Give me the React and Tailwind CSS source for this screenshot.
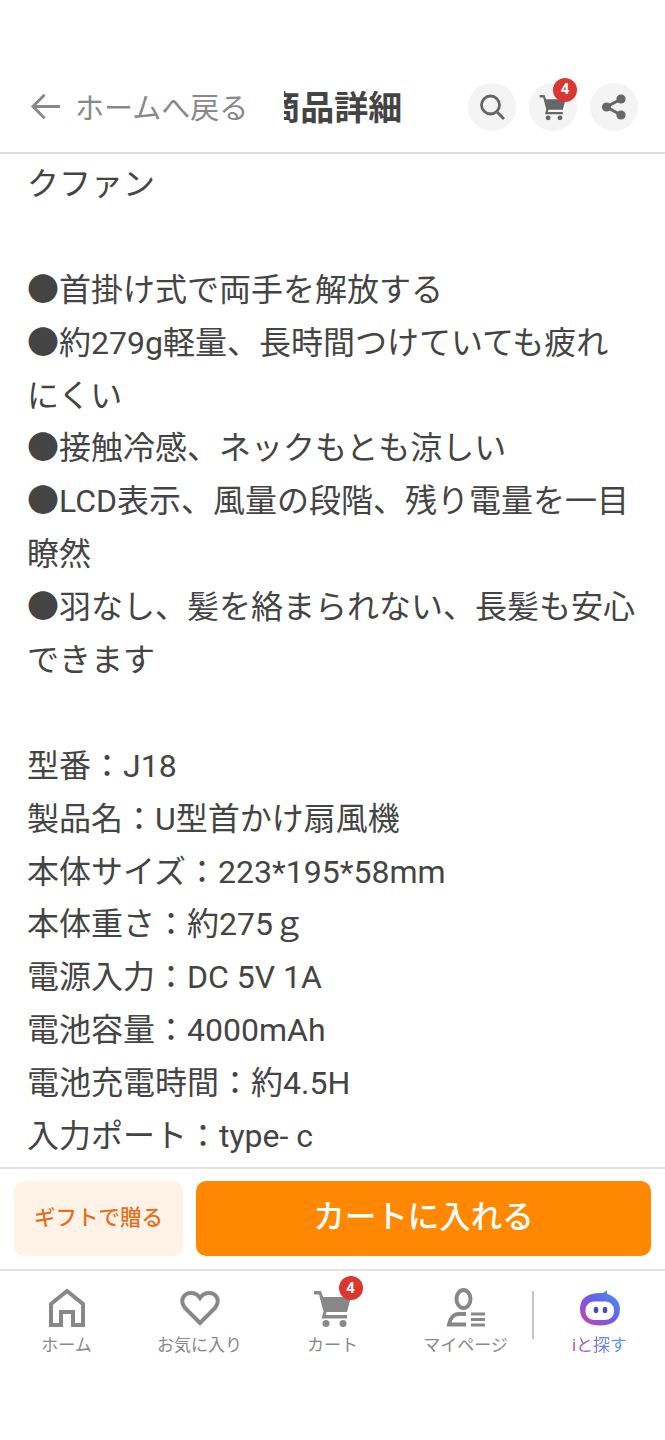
import React from 'react';

const FONT = 'Roboto, "Noto Sans CJK JP", sans-serif';

const LINES = [
  'クファン',
  '',
  '●首掛け式で両手を解放する',
  '●約279g軽量、長時間つけていても疲れ',
  'にくい',
  '●接触冷感、ネックもとも涼しい',
  '●LCD表示、風量の段階、残り電量を一目',
  '瞭然',
  '●羽なし、髪を絡まられない、長髪も安心',
  'できます',
  '',
  '型番：J18',
  '製品名：U型首かけ扇風機',
  '本体サイズ：223*195*58mm',
  '本体重さ：約275ｇ',
  '電源入力：DC 5V 1A',
  '電池容量：4000mAh',
  '電池充電時間：約4.5H',
  '入力ポート：type- c',
];

const CartIcon = ({ className }) => (
  <svg viewBox="0 0 40 40" className={className} fill="currentColor">
    <path d="M1 3h7l2 6h28l-4 15H13.5l-.8 3H34v3.5H8.5l2-7L6 6.5H1z" />
    <circle cx="13" cy="35.5" r="3.5" />
    <circle cx="30" cy="35.5" r="3.5" />
  </svg>
);

const Badge = ({ className }) => (
  <span className={`absolute flex h-6 w-6 items-center justify-center rounded-full bg-[#d9372f] text-[15px] font-bold leading-none text-white ${className}`}>
    4
  </span>
);

const IconButton = ({ children }) => (
  <div className="relative flex h-12 w-12 items-center justify-center rounded-full bg-[#f4f4f4] text-[#666]">
    {children}
  </div>
);

const Tab = ({ icon, label, className = 'text-[#888]' }) => (
  <div className="flex flex-col items-center">
    <div className="relative flex h-[46px] items-center justify-center">{icon}</div>
    <span className={`mt-[3px] text-[17px] leading-[22px] ${className}`}>{label}</span>
  </div>
);

export default function App() {
  return (
    <div className="flex h-[1440px] flex-col overflow-hidden bg-white" style={{ fontFamily: FONT }}>
      <header className="mt-[77px] flex h-[77px] shrink-0 items-center border-b-2 border-[#dddddd] pb-[16px] pl-[29px] pr-[27px]">
        <div className="flex shrink-0 items-center text-[#888]">
          <svg viewBox="0 0 34 30" className="h-[27px] w-[33px]" fill="none" stroke="currentColor" strokeWidth="3.2">
            <path d="M33 15H3M16 2 3 15l13 13" />
          </svg>
          <span className="ml-[13px] mt-[5px] whitespace-nowrap text-[29px] leading-none">ホームへ戻る</span>
        </div>
        <div className="ml-[36px] mt-[2px] flex w-[118px] justify-end overflow-hidden">
          <span className="shrink-0 whitespace-nowrap text-[34px] font-bold leading-none text-[#444]">商品詳細</span>
        </div>
        <div className="ml-auto flex gap-[13px]">
          <IconButton>
            <svg viewBox="0 0 28 28" className="h-7 w-7" fill="none" stroke="currentColor" strokeWidth="2.8">
              <circle cx="12.5" cy="12" r="9" />
              <path d="m19 19 7 7" />
            </svg>
          </IconButton>
          <IconButton>
            <CartIcon className="h-[28px] w-[28px]" />
            <Badge className="-top-[5px] right-0" />
          </IconButton>
          <IconButton>
            <svg viewBox="0 0 28 28" className="h-[28px] w-[28px]" fill="currentColor">
              <circle cx="21" cy="6" r="4.6" />
              <circle cx="6.5" cy="14" r="4.6" />
              <circle cx="21" cy="22" r="4.6" />
              <path d="M21 6 6.5 14 21 22" fill="none" stroke="currentColor" strokeWidth="3" />
            </svg>
          </IconButton>
        </div>
      </header>

      <main className="h-[1013px] shrink-0 overflow-hidden pl-[27px] pt-[4px] text-[32px] leading-[52.9px] text-[#444]">
        {LINES.map((line, i) => (
          <div key={i} className="h-[52.9px] whitespace-nowrap">{line}</div>
        ))}
      </main>

      <div className="flex h-[104px] shrink-0 gap-[13px] border-y-2 border-[#e2e2e2] px-[14px] pt-[12px]">
        <button className="h-[75px] w-[169px] rounded-[10px] bg-[#fff3e8] text-[21.5px] font-medium text-[#e4701c]">
          ギフトで贈る
        </button>
        <button className="h-[75px] flex-1 rounded-[10px] bg-[#ff8800] pb-[2px] text-[31.5px] font-medium text-white">
          カートに入れる
        </button>
      </div>

      <nav className="grid h-[100px] shrink-0 grid-cols-[133px_133px_133px_133px_2px_131px] pt-[14px]">
        <Tab
          label="ホーム"
          icon={
            <svg viewBox="0 0 36 40" className="h-[40px] w-[36px] text-[#888]" fill="none" stroke="currentColor" strokeWidth="4">
              <path d="M2 37V16L18 3l16 13v21H24V24H12v13z" />
            </svg>
          }
        />
        <Tab
          label="お気に入り"
          icon={
            <svg viewBox="0 0 40 36" className="h-[36px] w-[40px] text-[#888]" fill="none" stroke="currentColor" strokeWidth="4">
              <path d="M20 33 5 18C-1 10 4 3 11 3c4 0 7 2 9 5 2-3 5-5 9-5 7 0 12 7 6 15z" />
            </svg>
          }
        />
        <Tab
          label="カート"
          icon={
            <div className="relative">
              <CartIcon className="h-[40px] w-[40px] text-[#888]" />
              <Badge className="-top-[12px] -right-[10px]" />
            </div>
          }
        />
        <Tab
          label="マイページ"
          icon={
            <svg viewBox="0 0 40 40" className="h-[40px] w-[40px] text-[#888]" fill="none" stroke="currentColor" strokeWidth="4">
              <ellipse cx="17.500" cy="11" rx="7" ry="9" />
              <path d="M20 26h-7c-5 0-9 4-10 10.500h17" />
              <path d="M25 26h14M25 31.500h14M25 37h14" strokeWidth="3" />
            </svg>
          }
        />
        <div className="mt-[6px] h-[48px] w-[2px] bg-[#c4c4c4]" />
        <Tab
          label={
            <span className="bg-gradient-to-r from-[#c13fb0] via-[#6a78e0] to-[#4aa8e8] bg-clip-text text-transparent">iと探す</span>
          }
          className=""
          icon={
            <svg viewBox="0 0 42 38" className="h-[38px] w-[42px]">
              <defs>
                <linearGradient id="ai" x1="0" y1="1" x2="1" y2="0">
                  <stop offset="0" stopColor="#d63fa8" />
                  <stop offset="0.5" stopColor="#6a5ce8" />
                  <stop offset="1" stopColor="#3aa0f0" />
                </linearGradient>
              </defs>
              <path
                d="M21 4c3 0 4.500-.5 7-3-.2 2-.2 3 .5 4 7.500 2.500 12.500 8 12.500 15 0 11-8 16.500-20 16.500S1 31 1 20 9 4 21 4z"
                fill="url(#ai)"
              />
              <rect x="6.500" y="12.500" width="28.500" height="18.500" rx="8.500" fill="#fff" />
              <ellipse cx="17" cy="21" rx="2.300" ry="3.300" fill="#4a4ab8" />
              <ellipse cx="26" cy="21" rx="2.300" ry="3.300" fill="#4a4ab8" />
            </svg>
          }
        />
      </nav>
    </div>
  );
}
